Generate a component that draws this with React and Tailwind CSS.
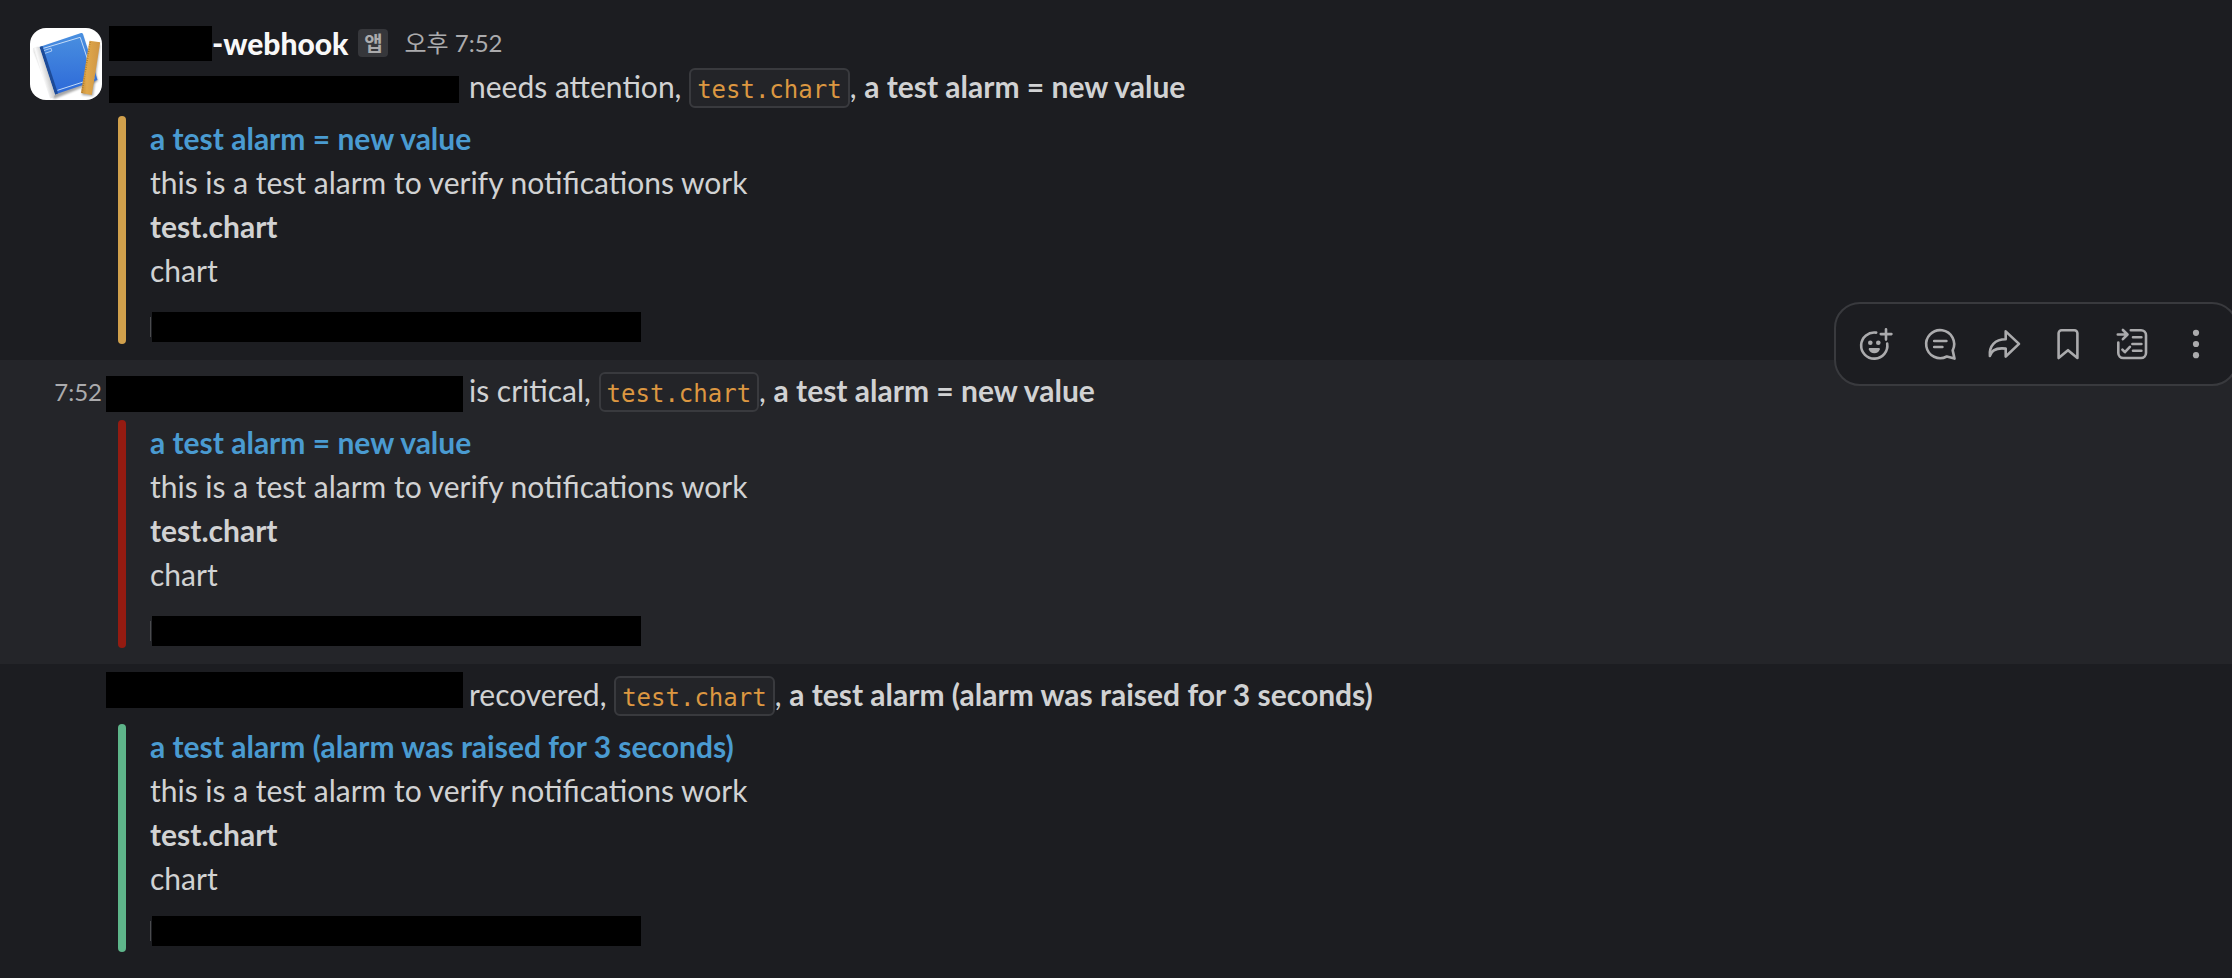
import React from "react";

const messages = [
  {
    id: "warning",
    lead: "needs attention,",
    title: "a test alarm = new value",
    bar: "bg-[#d0a04c]",
    head: true,
    mask: "h-[27px] w-[350px] -ml-[9px] mt-3",
    gap: "w-[10px]",
    footer: "mt-5",
  },
  {
    id: "critical",
    lead: "is critical,",
    title: "a test alarm = new value",
    bar: "bg-[#941b11]",
    time: "7:52",
    active: true,
    mask: "h-9 w-[357px] -ml-3 mt-2",
    gap: "w-[6px]",
    footer: "mt-5",
  },
  {
    id: "recovered",
    lead: "recovered,",
    title: "a test alarm (alarm was raised for 3 seconds)",
    bar: "bg-[#5eb58a]",
    mask: "h-9 w-[357px] -ml-3",
    gap: "w-[6px]",
    footer: "mt-4",
  },
];

const stroke = {
  fill: "none",
  stroke: "currentColor",
  strokeWidth: 2.6,
  strokeLinecap: "round",
  strokeLinejoin: "round",
};

const actions = [
  {
    label: "Add reaction",
    art: (
      <g transform="translate(-2 0)">
        <path {...stroke} d="M20.2 6.6A13.1 13.1 0 1 0 31.2 17.6M30 3.2v10.4M24.8 8.1h10.6" />
        <circle cx="14.3" cy="16.7" r="2.3" fill="currentColor" />
        <circle cx="22.3" cy="16.7" r="2.3" fill="currentColor" />
        <path d="M13.8 22h9c.8 0 1.2.6 1 1.3-.7 2.400-2.800 4-5.500 4s-4.800-1.600-5.500-4c-.2-.7.2-1.300 1-1.300z" fill="currentColor" />
      </g>
    ),
  },
  {
    label: "Reply in thread",
    art: (
      <path
        {...stroke}
        d="M30.700 24.400A14 14 0 1 0 24.800 30.500L32.500 32.600zM12.200 15h12.200M12.200 21h8.200"
      />
    ),
  },
  {
    label: "Forward message",
    art: (
      <path
        {...stroke}
        d="M19.700 5.400 33 17.900 19.700 30.500V22.600C11.500 21.700 5.500 23 3.900 30 2.900 20 9 13.300 19.700 13.300z"
      />
    ),
  },
  {
    label: "Save for later",
    art: (
      <path
        {...stroke}
        d="M11.600 4.300h12.800a3 3 0 0 1 3 3V32L18 24.200 8.600 32V7.300a3 3 0 0 1 3-3z"
      />
    ),
  },
  {
    label: "Add to list",
    art: (
      <path
        {...stroke}
        d="M16.800 4.300H27a5 5 0 0 1 5 5V27a5 5 0 0 1-5 5H9.300a5 5 0 0 1-5-5V16.500M3.800 8.500h9.600M8.900 4l4.600 4.500-4.600 4.700M19 11.300h8.400M18.400 18h9M19 24.800h8.400M8.400 23.600l2.500 2.600 5-5.400"
      />
    ),
  },
  {
    label: "More actions",
    art: (
      <>
        <circle cx="18" cy="6.800" r="3.100" fill="currentColor" />
        <circle cx="18" cy="18" r="3.100" fill="currentColor" />
        <circle cx="18" cy="29.200" r="3.100" fill="currentColor" />
      </>
    ),
  },
];

function Toolbar() {
  return (
    <div
      role="toolbar"
      aria-label="Message actions"
      className="absolute -top-[58px] -right-[6px] z-10 flex h-[84px] items-center rounded-[26px] border-2 border-[#393a3e] bg-[#1c1d21] px-2 text-[#ababad]"
    >
      {actions.map((a) => (
        <button key={a.label} type="button" aria-label={a.label} className="grid size-16 place-items-center">
          <svg viewBox="0 0 36 36" className="size-9" aria-hidden="true">
            {a.art}
          </svg>
        </button>
      ))}
    </div>
  );
}

function Avatar() {
  return (
    <svg viewBox="0 0 72 72" className="size-[72px] rounded-2xl" aria-hidden="true">
      <defs>
        <linearGradient id="cover" x1="0" y1="0" x2="0" y2="1">
          <stop offset="0" stopColor="#4a90e0" />
          <stop offset="1" stopColor="#2d69d8" />
        </linearGradient>
        <linearGradient id="spine" gradientUnits="userSpaceOnUse" x1="6" y1="45" x2="17" y2="42">
          <stop offset="0" stopColor="#c9c9c9" />
          <stop offset="0.5" stopColor="#fafafa" />
          <stop offset="1" stopColor="#cfcfcf" />
        </linearGradient>
        <linearGradient id="ruler" x1="0" y1="0" x2="1" y2="0">
          <stop offset="0" stopColor="#c98f38" />
          <stop offset="0.300" stopColor="#e0a84c" />
          <stop offset="1" stopColor="#cf9544" />
        </linearGradient>
        <filter id="shade" x="-20%" y="-20%" width="140%" height="140%">
          <feGaussianBlur stdDeviation="1.300" />
        </filter>
      </defs>
      <rect width="72" height="72" fill="#fff" />
      <path d="M4 22 52 7 68 53 24 71z" fill="#000" opacity=".35" filter="url(#shade)" />
      <path d="M60 15 70 17 63 68 52 67z" fill="#000" opacity=".35" filter="url(#shade)" />
      <path d="M9.500 19 51 5q1.500-.400 2 1L67.500 52 25 66.500z" fill="url(#cover)" />
      <path d="M9.500 19 12.500 18 28 65.500 25 66.500z" fill="#1d4b98" />
      <path d="M3 20.300Q5 18 9.500 19L25 66.500Q24 70 20 70.600z" fill="url(#spine)" />
      <path d="M13.500 20.300 50.200 9.300 64 50.500 27.500 62.300" fill="none" stroke="#c4dbf7" strokeWidth="1" />
      <path d="M14 22.500 21 20.200 21.800 23 15 25.300" fill="none" stroke="#c4dbf7" strokeWidth=".8" />
      <path d="M59.500 12.800 70.200 14.200 61.800 67 51 65z" fill="url(#ruler)" />
      <path d="M60.200 14 52 64.500" stroke="#a87528" strokeWidth="1.600" strokeDasharray=".7 1.600" />
    </svg>
  );
}

function Message({ m }) {
  return (
    <article
      className={`relative flex pr-10 pb-4 ${m.head ? "pt-5" : "pt-2"} ${m.active ? "bg-[#242529]" : ""}`}
    >
      <div className={`flex w-[118px] shrink-0 justify-end pr-4 ${m.head ? "pt-2" : ""}`}>
        {m.head && <Avatar />}
        {m.time && <time className="text-2xl/[48px] text-[#ababad]">{m.time}</time>}
      </div>
      <div className="min-w-0 flex-1">
        {m.head && (
          <header className="flex h-11 items-center pt-[2px] whitespace-nowrap">
            <span className="-ml-[9px] h-[35px] w-[103px] bg-black" />
            <span className="text-[30px]/[44px] font-black text-[#f8f8f8]">-webhook</span>
            <span className="ml-[10px] grid h-7 w-[30px] place-items-center rounded-sm bg-[#36373b] text-xl/7 font-bold text-[#ababad]">
              앱
            </span>
            <time className="ml-4 text-2xl/[44px] text-[#ababad]">오후 7:52</time>
          </header>
        )}
        <p className="flex h-11 items-start whitespace-nowrap">
          <span className={`shrink-0 bg-black ${m.mask}`} />
          <span className={`shrink-0 ${m.gap}`} />
          <span>
            {m.lead}{" "}
            <code className="rounded-md border-2 border-[#393a3e] bg-[#232428] px-[6px] pt-[6px] pb-[2px] font-['DejaVu_Sans_Mono',monospace] text-2xl/9 text-[#dc9741]">
              test.chart
            </code>
            , <b className="font-bold">{m.title}</b>
          </span>
        </p>
        <section className="mt-2 flex gap-6">
          <div className={`w-2 shrink-0 rounded-full ${m.bar}`} />
          <div className="h-[228px]">
            <a href={`#${m.id}`} className="block font-bold text-[#4a9bd1]">
              {m.title}
            </a>
            <p>this is a test alarm to verify notifications work</p>
            <p className="font-bold">test.chart</p>
            <p>chart</p>
            <div className={`flex items-center ${m.footer}`}>
              <span className="h-5 w-px bg-[#4a4b4e]" />
              <span className="ml-px h-[30px] w-[489px] bg-black" />
            </div>
          </div>
        </section>
      </div>
      {m.active && <Toolbar />}
    </article>
  );
}

export default function App() {
  return (
    <main className="min-h-screen overflow-hidden bg-[#1c1d21] font-[Lato,'Noto_Sans_CJK_KR',sans-serif] text-[30px]/[44px] text-[#d1d2d3]">
      {messages.map((m) => (
        <Message key={m.id} m={m} />
      ))}
    </main>
  );
}
